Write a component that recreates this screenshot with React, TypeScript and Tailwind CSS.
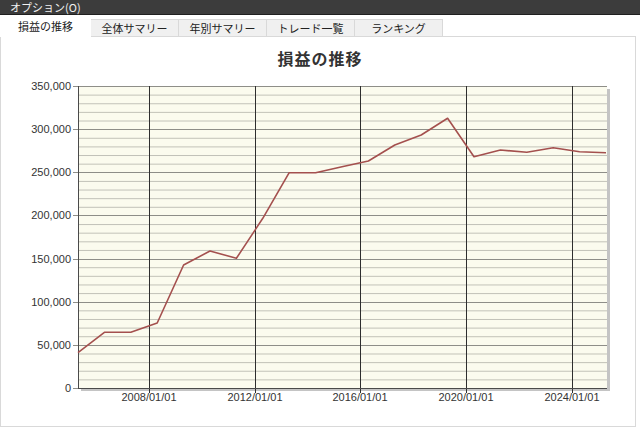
import React from 'react';

const TABS = ['損益の推移', '全体サマリー', '年別サマリー', 'トレード一覧', 'ランキング'];

// plot area in page coordinates
const PX0 = 78;
const PX1 = 607;
const PY0 = 86;
const PY1 = 388;
const YMAX = 350000;

const yOf = (v: number) => PY1 - (v / YMAX) * (PY1 - PY0);

const POINTS: [number, number][] = [
  [78, 352.7], [104.4, 332.3], [130.8, 332.3], [157.2, 323], [183.6, 265],
  [210, 251], [236.4, 258.3], [262.8, 218.3], [289.2, 172.7], [315.6, 172.7],
  [342, 166.7], [368.4, 161], [394.8, 145], [421.2, 135], [447.6, 118.3],
  [474, 156.7], [500.4, 150], [526.8, 152.3], [553.2, 147.7], [579.6, 151.7],
  [606, 152.7],
];

const X_TICKS: [number, string][] = [
  [149, '2008/01/01'],
  [255, '2012/01/01'],
  [360, '2016/01/01'],
  [466, '2020/01/01'],
  [572, '2024/01/01'],
];

function Chart() {
  const minor: number[] = [];
  for (let v = 10000; v < YMAX; v += 10000) minor.push(v);
  const major: number[] = [];
  for (let v = 0; v <= YMAX; v += 50000) major.push(v);

  return (
    <svg width={634} height={353} className="block">
      <g transform="translate(-1,-73)" fontFamily="'Liberation Sans', Arial, sans-serif" fontSize={11}>
        {/* shadow */}
        <rect x={PX0 + 3} y={PY0 + 3} width={PX1 - PX0} height={PY1 - PY0} fill="#c4c4c4" />
        <rect x={PX0} y={PY0} width={PX1 - PX0} height={PY1 - PY0} fill="#fbfbee" />

        {minor
          .filter((v) => v % 50000 !== 0)
          .map((v) => (
            <line key={v} x1={PX0} x2={PX1} y1={yOf(v) + 0.5} y2={yOf(v) + 0.5} stroke="#c2c2b8" strokeWidth={1} />
          ))}
        {major.map((v) => (
          <line key={v} x1={PX0 - 5} x2={PX1} y1={Math.round(yOf(v)) + 0.5} y2={Math.round(yOf(v)) + 0.5} stroke="#8e8e88" strokeWidth={1} />
        ))}

        {X_TICKS.map(([x]) => (
          <line key={x} x1={x + 0.5} x2={x + 0.5} y1={PY0} y2={PY1 + 5} stroke="#2e2e2e" strokeWidth={1} />
        ))}

        {/* axes */}
        <line x1={PX0 + 0.5} x2={PX0 + 0.5} y1={PY0} y2={PY1} stroke="#4a4a4a" />
        <line x1={PX0} x2={PX1} y1={PY1 + 0.5} y2={PY1 + 0.5} stroke="#4a4a4a" />

        <polyline
          points={POINTS.map(([x, y]) => `${x},${y}`).join(' ')}
          fill="none"
          stroke="#a4504e"
          strokeWidth={1.6}
          strokeLinejoin="round"
        />

        {major.map((v) => (
          <text key={v} x={71} y={Math.round(yOf(v)) + 4} textAnchor="end" fill="#333">
            {v.toLocaleString('en-US')}
          </text>
        ))}
        {X_TICKS.map(([x, label]) => (
          <text key={label} x={x} y={401} textAnchor="middle" fill="#333">
            {label}
          </text>
        ))}
      </g>
    </svg>
  );
}

export default function App() {
  return (
    <div
      className="w-[640px] h-[430px] bg-white overflow-hidden text-[#222]"
      style={{ fontFamily: "'Noto Sans CJK JP', 'Liberation Sans', sans-serif" }}
    >
      <div className="h-[15px] bg-[#3c3c3c] border-b border-[#1f1f1f] pl-[10px] text-[11px] leading-[14px] text-[#f2f2f2]">
        オプション(O)
      </div>

      <div className="flex items-end h-[21px]">
        {TABS.map((t, i) =>
          i === 0 ? (
            <div
              key={t}
              className="relative z-10 -mb-px w-[91px] h-[22px] bg-white flex items-center justify-center text-[11px] leading-none pt-[1px]"
            >
              {t}
            </div>
          ) : (
            <div
              key={t}
              className="w-[89px] h-[17px] bg-[#f0f0f0] border border-b-0 border-[#d9d9d9] -ml-px first:ml-0 flex items-center justify-center text-[11px] leading-none"
            >
              {t}
            </div>
          ),
        )}
      </div>

      <div className="w-[636px] h-[391px] border border-[#d9d9d9] bg-white">
        <div className="h-[36px] flex items-center justify-center pl-[4px] pt-[5px] text-[16px] font-bold text-[#333] tracking-[1px]">
          損益の推移
        </div>
        <Chart />
      </div>
    </div>
  );
}
